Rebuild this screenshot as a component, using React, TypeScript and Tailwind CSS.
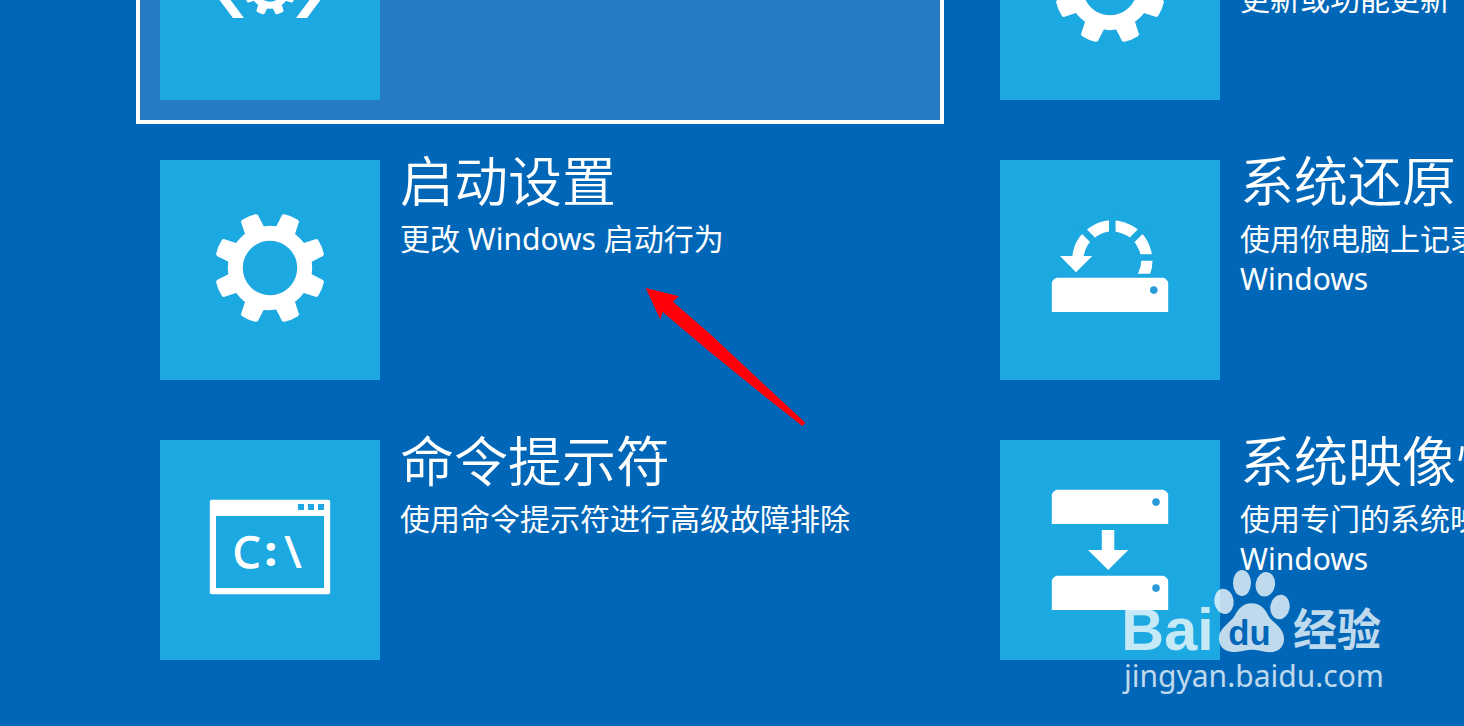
import type { ReactNode } from 'react';

const TEETH = [22.5, 67.5, 112.5, 157.5, 202.5, 247.5, 292.5, 337.5];

function Gear({ cx, cy, scale = 1 }: { cx: number; cy: number; scale?: number }) {
  return (
    <g transform={`translate(${cx} ${cy}) scale(${scale})`} className="fill-white stroke-white">
      <circle r="34.7" fill="none" strokeWidth="15" />
      {TEETH.map((angle) => (
        <path
          key={angle}
          d="M-10.4-37 L-9.2-53 Q-9-54.8-7.2-55.2 Q0-56.6 7.2-55.2 Q9-54.8 9.2-53 L10.4-37 Z"
          transform={`rotate(${angle})`}
          stroke="none"
        />
      ))}
    </g>
  );
}

function Drive({ y, dotX }: { y: number; dotX: number }) {
  return (
    <g transform={`translate(0 ${y})`}>
      <path d="M51.8 34.3V5Q52.6 1.4 57 0H163Q167.4 1.4 168.2 5V34.3Z" className="fill-white" />
      <circle cx={dotX} cy="12.3" r="3.8" className="fill-[#2a9bd8]" />
    </g>
  );
}

function TileIcon({ children }: { children: ReactNode }) {
  return (
    <svg viewBox="0 0 220 220" className="size-55 shrink-0 bg-[#1ca8e1]" aria-hidden="true">
      {children}
    </svg>
  );
}

function RepairIcon() {
  return (
    <TileIcon>
      <path d="M84 82H73L52 110L73 138H84L63 110Z M136 82H147L168 110L147 138H136L157 110Z" className="fill-white" />
      <Gear cx={110} cy={109} scale={0.47} />
    </TileIcon>
  );
}

function GearIcon() {
  return (
    <TileIcon>
      <Gear cx={110} cy={108} />
    </TileIcon>
  );
}

function RestoreIcon() {
  return (
    <TileIcon>
      <clipPath id="arc-clip">
        <rect x="60" y="50" width="100" height="63.7" />
      </clipPath>
      <path
        d="M77.8 98A34.5 34.5 0 1 1 142 118"
        fill="none"
        strokeWidth="11.2"
        clipPath="url(#arc-clip)"
        className="stroke-white"
      />
      <path
        d="M112.3 55V75M132 79.8L145 66.8M92.6 79.8L79.6 66.8M136 97.5H156"
        strokeWidth="6.6"
        className="stroke-[#1ca8e1]"
      />
      <path d="M60 96H92.3L76 112.2Z" className="fill-white" />
      <Drive y={117.8} dotX={153.8} />
    </TileIcon>
  );
}

function PromptIcon() {
  return (
    <TileIcon>
      <rect x="49.8" y="59.8" width="120.4" height="94.4" rx="2" className="fill-white" />
      <path d="M56 76H164V148H56ZM138 64H144V70H138ZM148 64H154V70H148ZM158 64H164V70H158Z" className="fill-[#1ca8e1]" />
      <text y="128" fontSize="43" className="fill-white font-['Open_Sans',sans-serif]">
        <tspan x="73" strokeWidth="1.5" className="stroke-white">C</tspan>
        <tspan x="105" dy="-2" fontSize="40" fontWeight="800">:</tspan>
        <tspan x="124" dy="2" fontSize="46" fontWeight="600">\</tspan>
      </text>
    </TileIcon>
  );
}

function ImageIcon() {
  return (
    <TileIcon>
      <Drive y={49.8} dotX={156} />
      <path d="M101.8 90H114.3V110H128.3L108.2 130L88 110H101.8Z" className="fill-white" />
      <Drive y={135.8} dotX={156} />
    </TileIcon>
  );
}

type Option = { title: string; description: string; icon: ReactNode; selected?: boolean };

const OPTIONS: Option[] = [
  { title: '启动修复', description: '修复妨碍 Windows 加载的问题', icon: <RepairIcon />, selected: true },
  { title: '卸载更新', description: '从 Windows 中删除最近安装的质量更新或功能更新', icon: <GearIcon /> },
  { title: '启动设置', description: '更改 Windows 启动行为', icon: <GearIcon /> },
  { title: '系统还原', description: '使用你电脑上记录的还原点还原 Windows', icon: <RestoreIcon /> },
  { title: '命令提示符', description: '使用命令提示符进行高级故障排除', icon: <PromptIcon /> },
  { title: '系统映像恢复', description: '使用专门的系统映像文件恢复 Windows', icon: <ImageIcon /> },
];

function OptionCard({ title, description, icon, selected }: Option) {
  return (
    <button
      type="button"
      className={`flex items-start gap-5 border-4 p-5 text-left ${
        selected ? 'border-white bg-[#267bc3]' : 'border-transparent'
      }`}
    >
      {icon}
      <span className="-mt-[9px] flex flex-col gap-2 pr-5">
        <span className="text-[54px] leading-15 font-[350]">{title}</span>
        <span className="text-[30px] leading-10">{description}</span>
      </span>
    </button>
  );
}

function PointerArrow() {
  return (
    <svg viewBox="46 52 484 420" className="absolute top-[287px] left-[645px] w-[161px]" aria-hidden="true">
      <path
        d="M48 55L148 80L130 96L250 201L400 341L528 460L519 470L400 376L235 242L99 127L92 150Z"
        className="fill-[#ff0008]"
      />
    </svg>
  );
}

function Watermark() {
  return (
    <div className="pointer-events-none absolute right-[76px] bottom-8 flex w-[264px] flex-col gap-1 text-white/75">
      <svg viewBox="70 30 792 255" className="w-[264px] fill-current" role="img" aria-label="Baidu 经验">
        <text x="62" y="273" fontSize="178" className="font-['Liberation_Sans',sans-serif] font-bold">Bai</text>
        <ellipse cx="370" cy="127" rx="29" ry="38" transform="rotate(-8 370 127)" />
        <ellipse cx="424" cy="72" rx="27" ry="39" />
        <ellipse cx="494" cy="76" rx="29" ry="37" transform="rotate(10 494 76)" />
        <ellipse cx="538" cy="144" rx="29" ry="37" transform="rotate(8 538 144)" />
        <path d="M453 133C480 133 493 150 503 170C515 192 550 205 550 240C550 268 528 282 500 279C480 276 470 272 453 272C436 272 424 277 405 279C375 281 355 266 355 238C355 207 388 192 401 172C412 151 426 133 453 133Z" />
        <text x="383" y="257" fontSize="104" className="fill-[#0067b8] font-['Liberation_Sans',sans-serif] font-bold">du</text>
        <text x="577" y="262" fontSize="132" className="font-['Noto_Sans_CJK_SC',sans-serif] font-bold">经验</text>
      </svg>
      <span className="font-['Noto_Sans',sans-serif] text-[30px] leading-9">jingyan.baidu.com</span>
    </div>
  );
}

export default function App() {
  return (
    <main className="relative min-h-screen overflow-hidden bg-[#0067b8] font-['Noto_Sans','Noto_Sans_CJK_SC',sans-serif] text-white">
      <div className="-mt-36 grid grid-cols-[repeat(2,808px)] gap-x-8 gap-y-3 pl-34">
        {OPTIONS.map((option) => (
          <OptionCard key={option.title} {...option} />
        ))}
      </div>
      <PointerArrow />
      <Watermark />
    </main>
  );
}
